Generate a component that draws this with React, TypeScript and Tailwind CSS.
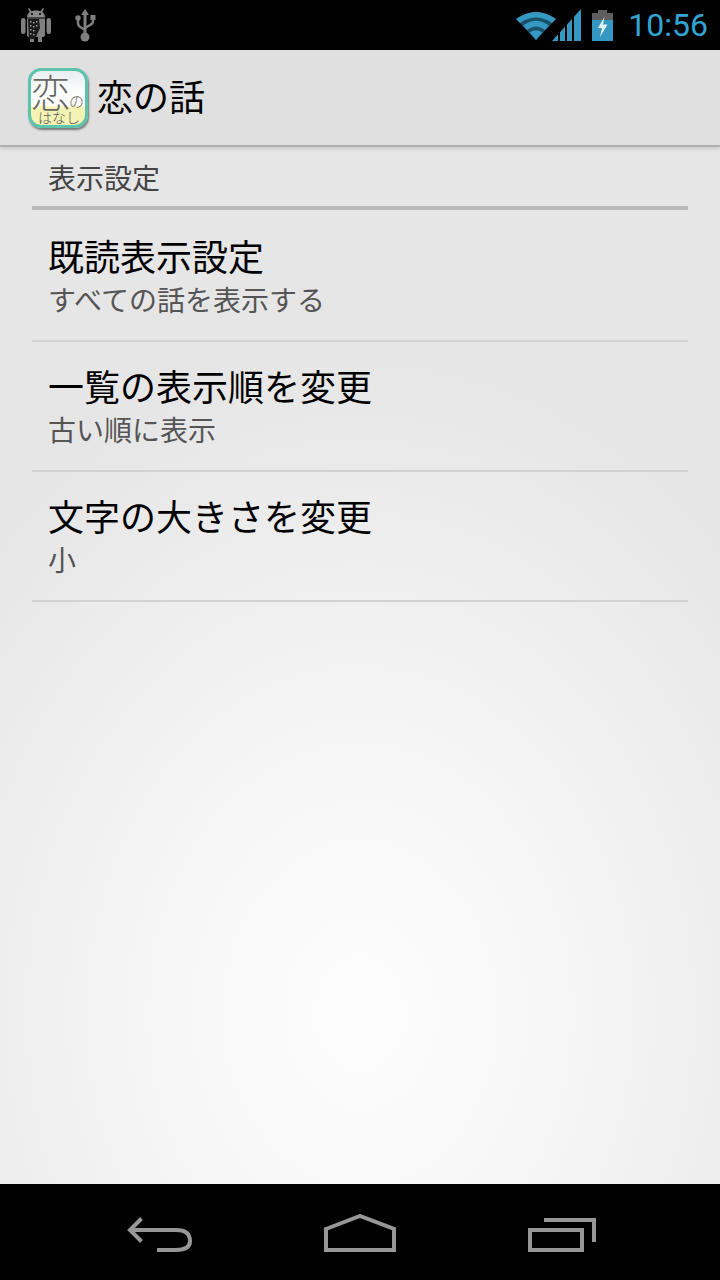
const JP = "font-['Noto_Sans_CJK_JP','Noto_Sans_CJK_SC',sans-serif]";

function AndroidIcon() {
  return (
    <svg width="30" height="34" viewBox="0 0 30 34" className="block">
      <path d="M7.500 0.500 L10 4 M22.500 0.500 L20 4" stroke="#8a8a8a" strokeWidth="1.5" />
      <path d="M6 9.500 C6 5 9.500 2.500 15 2.500 C20.500 2.500 24 5 24 9.500 Z" fill="#8a8a8a" />
      <circle cx="11" cy="6" r="1" fill="#000" />
      <circle cx="19" cy="6" r="1" fill="#000" />
      <rect x="0" y="10" width="4.500" height="16" rx="2.200" fill="#808080" />
      <rect x="25.500" y="10" width="4.500" height="16" rx="2.200" fill="#808080" />
      <path d="M6 10.500 H24 V27 Q24 29 21 29 V34 H17 V29 H13 V34 H9 V29 Q6 29 6 27 Z" fill="#808080" />
      <path d="M7 11 H18 L19 20 L14 31 H8 Z" fill="#1a1a1a" />
      <g fill="#a0a0a0">
        <rect x="9" y="13" width="1.500" height="1.500" /><rect x="12" y="14" width="1.500" height="1.500" /><rect x="15" y="13" width="1.500" height="1.500" />
        <rect x="9" y="17" width="1.500" height="1.500" /><rect x="12" y="18" width="1.500" height="1.500" /><rect x="15" y="17" width="1.500" height="1.500" />
        <rect x="9" y="21" width="1.500" height="1.500" /><rect x="12" y="22" width="1.500" height="1.500" />
        <rect x="9" y="25" width="1.500" height="1.500" /><rect x="12" y="26" width="1.500" height="1.500" />
      </g>
    </svg>
  );
}

function UsbIcon() {
  return (
    <svg width="21" height="33" viewBox="0 0 21 33" className="block">
      <path d="M10 0 L14 6 H6 Z" fill="#7f7f7f" />
      <path d="M10 5 V27" stroke="#7f7f7f" strokeWidth="3" />
      <circle cx="10" cy="28" r="4.500" fill="#7f7f7f" />
      <path d="M3 10 V14 Q3 17 6 18.500 L10 21" stroke="#7f7f7f" strokeWidth="2.400" fill="none" />
      <path d="M18 10 V12 Q18 15 15 16 L10 19" stroke="#7f7f7f" strokeWidth="2.400" fill="none" />
      <circle cx="3" cy="9" r="2.700" fill="#7f7f7f" />
      <rect x="15.500" y="6" width="5" height="5" fill="#7f7f7f" />
    </svg>
  );
}

function WifiIcon() {
  return (
    <svg width="40" height="30" viewBox="0 0 40 30" className="block">
      <path d="M0 9 Q20 -5 40 9 L20 30 Z" fill="#1a4f68" />
      <path d="M0 9 Q20 -5 40 9 L36 13 Q20 2 4 13 Z" fill="#3498c2" />
      <path d="M7 15.500 Q20 6 33 15.500 L29 20 Q20 13 11 20 Z" fill="#3498c2" />
      <path d="M13.500 22.500 Q20 18 26.500 22.500 L20 30 Z" fill="#3498c2" />
    </svg>
  );
}

function SignalIcon() {
  return (
    <svg width="29" height="32" viewBox="0 0 29 32" className="block">
      <path d="M0 32 L29 0 V32 Z" fill="#3498c2" />
      <path d="M7 32 V22 M14 32 V14 M21 32 V6" stroke="#000" strokeWidth="2" />
    </svg>
  );
}

function BatteryIcon() {
  return (
    <svg width="21" height="31" viewBox="0 0 21 31" className="block">
      <rect x="6" y="0" width="9" height="3" fill="#5e5e5e" />
      <rect x="0" y="3" width="21" height="28" fill="#3498c2" />
      <rect x="0" y="3" width="21" height="7" fill="#5e5e5e" />
      <path d="M12.500 7 L6 18 H10 L8 27 L15.500 14.500 H11 Z" fill="#e8f4f8" />
    </svg>
  );
}

function AppIcon() {
  return (
    <div className="relative w-[60px] h-[60px] rounded-[13px] border-[3px] border-[#5cc4ac] bg-[linear-gradient(to_bottom,#e8eef0_0%,#ffffff_45%,#ffffff_62%,#f4f3b4_68%,#f4f3b4_100%)] overflow-hidden shadow-[1px_2px_2px_#777]">
      <span className={`absolute left-0 top-0 text-[39px] leading-[39px] font-light text-[#666] ${JP}`}>恋</span>
      <span className={`absolute left-[38px] top-[22px] text-[15px] leading-[15px] font-light text-[#666] ${JP}`}>の</span>
      <span className={`absolute left-[7px] top-[39px] text-[14px] leading-[15px] font-light whitespace-nowrap text-[#555] ${JP}`}>はなし</span>
    </div>
  );
}

function Row({ title, sub }: { title: string; sub: string }) {
  return (
    <div className="h-[130px] border-b-2 border-[#d2d2d2] px-[16px] pt-[20px]">
      <div className={`text-[36px] leading-[46px] text-black ${JP}`}>{title}</div>
      <div className={`mt-[2px] text-[28px] leading-[38px] text-[#555] ${JP}`}>{sub}</div>
    </div>
  );
}

export default function App() {
  return (
    <div className="w-[720px] h-[1280px] flex flex-col bg-black overflow-hidden">
      <div className="h-[50px] flex items-center bg-black pl-[21px] pr-[12px]">
        <AndroidIcon />
        <div className="ml-[24px]"><UsbIcon /></div>
        <div className="ml-auto flex items-center">
          <WifiIcon />
          <div className="ml-[-4px]"><SignalIcon /></div>
          <div className="ml-[11px]"><BatteryIcon /></div>
          <span className="ml-[15px] text-[32px] leading-[50px] text-[#33a5d5] font-['Roboto',sans-serif]">10:56</span>
        </div>
      </div>
      <div className="flex-1 flex flex-col bg-[radial-gradient(ellipse_520px_660px_at_50%_85%,#fdfdfd_0%,#f7f7f7_35%,#eeeeee_70%,#e6e6e6_100%)]">
        <div className="h-[97px] flex items-center bg-[#e0e0e0] border-b-2 border-[#b0b0b0] pl-[28px] shadow-[0_2px_4px_rgba(0,0,0,0.12)]">
          <AppIcon />
          <span className={`ml-[9px] pb-[6px] text-[36px] leading-[46px] text-black ${JP}`}>恋の話</span>
        </div>
        <div className="px-[32px]">
          <div className="h-[63px] border-b-[4px] border-[#b8b8b8] px-[16px] flex items-center">
            <span className={`text-[28px] leading-[38px] text-[#444] ${JP}`}>表示設定</span>
          </div>
          <div className="pt-[2px]">
            <Row title="既読表示設定" sub="すべての話を表示する" />
            <Row title="一覧の表示順を変更" sub="古い順に表示" />
            <Row title="文字の大きさを変更" sub="小" />
          </div>
        </div>
      </div>
      <div className="h-[96px] bg-black flex items-start justify-between pt-[30px] pl-[127px] pr-[124px]">
        <svg width="65" height="40" viewBox="0 0 65 40" className="block">
          <path d="M14.500 4.500 L3 16 L14.500 27.500 M3 16 H49 Q63 16 63 27 Q63 36 49 36 H30" stroke="#979797" strokeWidth="4" fill="none" />
        </svg>
        <svg width="72" height="40" viewBox="0 0 72 40" className="block">
          <path d="M2 15 L36 2 L70 15 V36 H2 Z" stroke="#979797" strokeWidth="4" fill="none" />
        </svg>
        <svg width="68" height="40" viewBox="0 0 68 40" className="block">
          <path d="M2 16 H54 V36 H2 Z M16 6 H66 V28" stroke="#979797" strokeWidth="4" fill="none" />
        </svg>
      </div>
    </div>
  );
}
